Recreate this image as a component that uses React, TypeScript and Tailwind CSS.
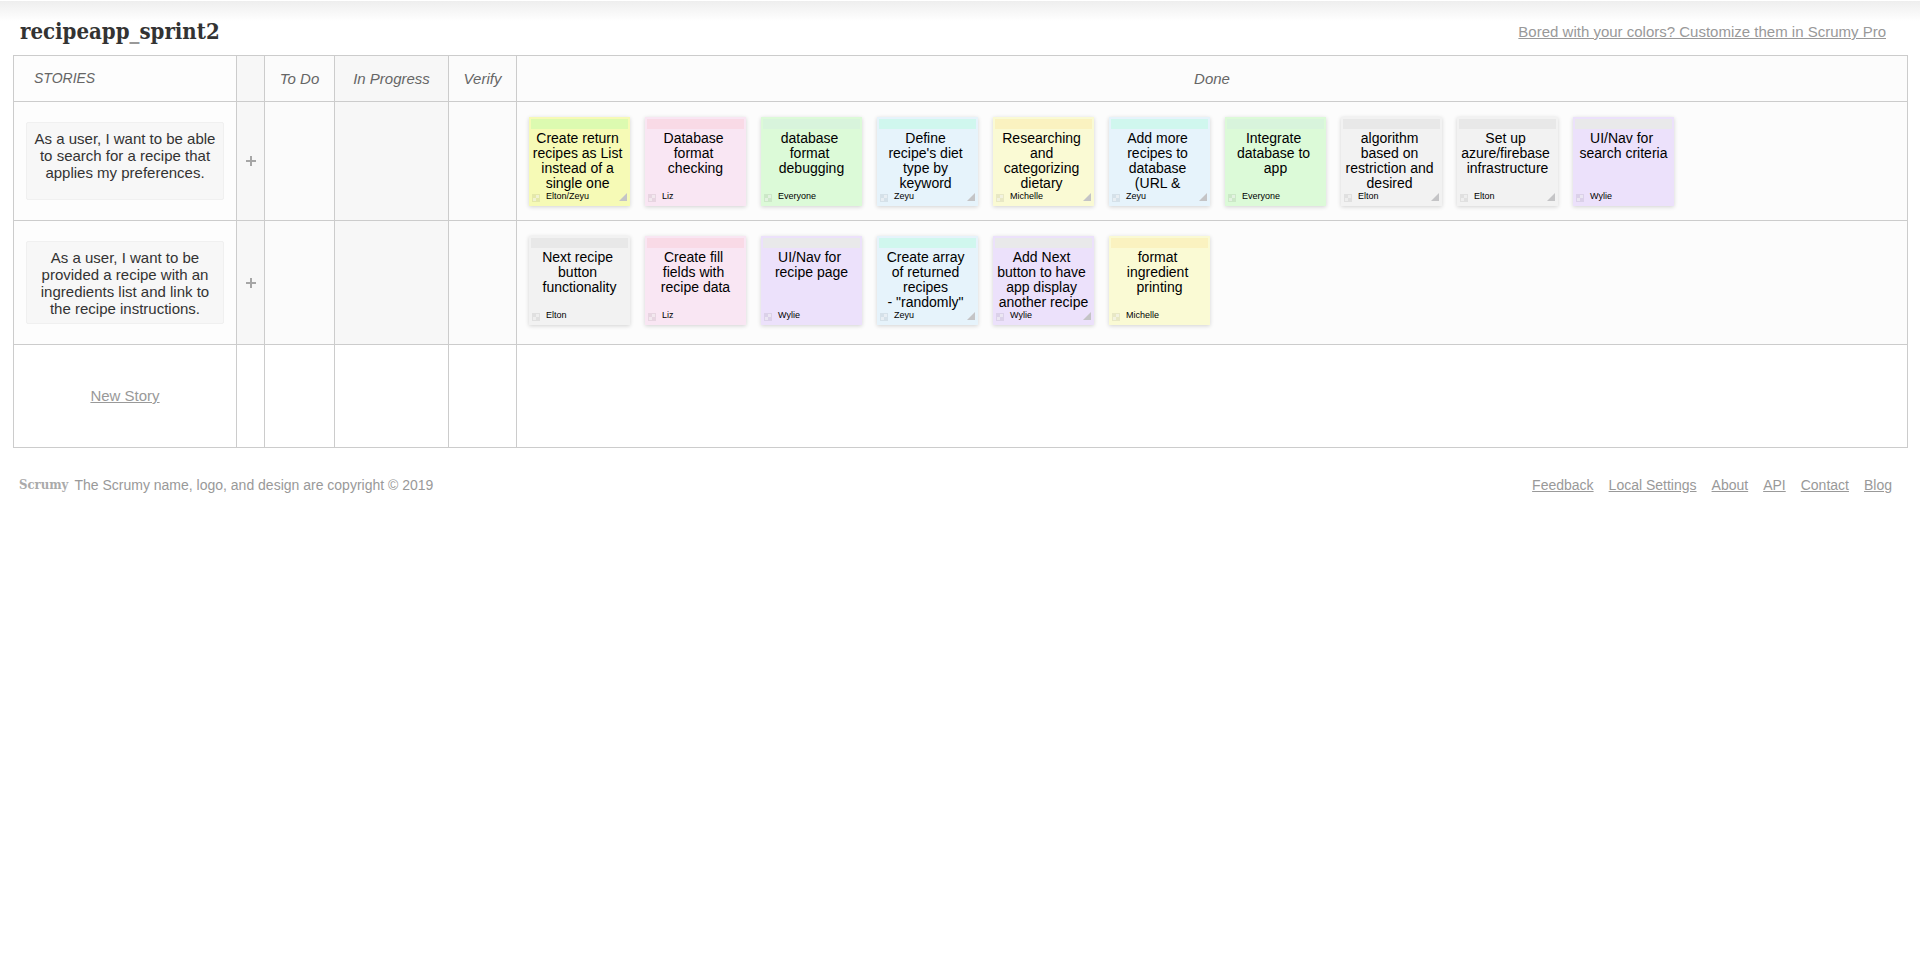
type Color = 'lime' | 'pink' | 'green' | 'blue' | 'yellow' | 'gray' | 'purple';

interface Task {
  color: Color;
  lines: string[];
  owner: string;
  /** The description runs on past the last visible line. */
  clipped?: boolean;
  grip?: boolean;
}

interface Story {
  title: string;
  done: Task[];
}

const noteColors: Record<Color, { body: string; bar: string }> = {
  lime: { body: 'bg-[#f6fab6]', bar: 'bg-[#dcfab0]' },
  pink: { body: 'bg-[#f9e6f3]', bar: 'bg-[#f9dae6]' },
  green: { body: 'bg-[#dcfad8]', bar: 'bg-[#d8f4dc]' },
  blue: { body: 'bg-[#e6f3fb]', bar: 'bg-[#d0f7ee]' },
  yellow: { body: 'bg-[#fafad4]', bar: 'bg-[#faf2c0]' },
  gray: { body: 'bg-[#f2f2f2]', bar: 'bg-[#e8e8e8]' },
  purple: { body: 'bg-[#ece1fb]', bar: 'bg-[#e9e9ea]' },
};

const stories: Story[] = [
  {
    title: 'As a user, I want to be able to search for a recipe that applies my preferences.',
    done: [
      { color: 'lime', lines: ['Create return', 'recipes as List', 'instead of a', 'single one'], owner: 'Elton/Zeyu', clipped: true, grip: true },
      { color: 'pink', lines: ['Database', 'format', 'checking'], owner: 'Liz' },
      { color: 'green', lines: ['database', 'format', 'debugging'], owner: 'Everyone' },
      { color: 'blue', lines: ['Define', "recipe's diet", 'type by', 'keyword'], owner: 'Zeyu', clipped: true, grip: true },
      { color: 'yellow', lines: ['Researching', 'and', 'categorizing', 'dietary'], owner: 'Michelle', clipped: true, grip: true },
      { color: 'blue', lines: ['Add more', 'recipes to', 'database', '(URL &'], owner: 'Zeyu', clipped: true, grip: true },
      { color: 'green', lines: ['Integrate', 'database to', 'app'], owner: 'Everyone' },
      { color: 'gray', lines: ['algorithm', 'based on', 'restriction and', 'desired'], owner: 'Elton', clipped: true, grip: true },
      { color: 'gray', lines: ['Set up', 'azure/firebase', 'infrastructure'], owner: 'Elton', grip: true },
      { color: 'purple', lines: ['UI/Nav for', 'search criteria'], owner: 'Wylie' },
    ],
  },
  {
    title: 'As a user, I want to be provided a recipe with an ingredients list and link to the recipe instructions.',
    done: [
      { color: 'gray', lines: ['Next recipe', 'button', 'functionality'], owner: 'Elton' },
      { color: 'pink', lines: ['Create fill', 'fields with', 'recipe data'], owner: 'Liz' },
      { color: 'purple', lines: ['UI/Nav for', 'recipe page'], owner: 'Wylie' },
      { color: 'blue', lines: ['Create array', 'of returned', 'recipes', '- "randomly"'], owner: 'Zeyu', clipped: true, grip: true },
      { color: 'purple', lines: ['Add Next', 'button to have', 'app display', 'another recipe'], owner: 'Wylie', grip: true },
      { color: 'yellow', lines: ['format', 'ingredient', 'printing'], owner: 'Michelle' },
    ],
  },
];

const footerLinks = ['Feedback', 'Local Settings', 'About', 'API', 'Contact', 'Blog'];

const cell = 'border border-[#cccccc] p-0';
const heading = 'border border-[#cccccc] p-0 text-[15px] leading-4 font-normal italic text-[#666666]';

function Note({ task }: { task: Task }) {
  const { body, bar } = noteColors[task.color];
  return (
    <li className={`flex h-[89px] w-[101px] flex-col p-[2px] shadow-[0_1px_4px_rgba(0,0,0,0.17)] ${body}`}>
      <div className={`h-[10px] shrink-0 ${bar}`} />
      <p className="mt-[2px] flex h-[60px] shrink-0 justify-center text-center text-[14px] leading-[15px] whitespace-pre text-black">
        {task.lines.join(' \n') + (task.clipped ? ' ' : '')}
      </p>
      <div className="flex h-[11px] items-center px-px">
        <svg className="mt-[2px] h-2 w-2" viewBox="0 0 8 8" aria-hidden="true">
          <rect width="8" height="8" fill="#000" opacity="0.07" />
          <path d="M4 1h3v3H4zM1 4h3v3H1z" fill="#fff" opacity="0.45" />
        </svg>
        <span className="ml-[6px] text-[9px] leading-[11px] text-black">{task.owner}</span>
        {task.grip && (
          <svg className="mt-px ml-auto h-2 w-2" viewBox="0 0 8 8" aria-hidden="true">
            <path d="M8 0v8H0z" fill="#c4c4c6" />
          </svg>
        )}
      </div>
    </li>
  );
}

function StoryRow({ story }: { story: Story }) {
  return (
    <tr>
      <td className={`${cell} bg-[#fdfdfd]`}>
        <div className="mx-3 my-5 min-h-[78px] rounded-xs border border-[#f0f0f0] bg-[#f7f7f7] px-1 pt-[7px] pb-[6px] text-center text-[15px] leading-[17px] text-[#333333]">
          {story.title}
        </div>
      </td>
      <td className={`${cell} bg-[#f7f7f7]`}>
        <button type="button" aria-label="Add task" className="mx-auto flex h-6 w-6 items-center justify-center">
          <svg className="h-[10px] w-[10px]" viewBox="0 0 10 10" aria-hidden="true">
            <path d="M4 0h2v4h4v2H6v4H4V6H0V4h4z" fill="#a6a6a6" />
          </svg>
        </button>
      </td>
      <td className={`${cell} bg-[#fbfbfb]`} />
      <td className={`${cell} bg-[#f7f7f7]`} />
      <td className={`${cell} bg-[#fbfbfb]`} />
      <td className={`${cell} bg-[#fcfcfc] align-top`}>
        <ul className="flex flex-wrap gap-[15px] px-3 pt-[15px] pb-[14px]">
          {story.done.map((task) => (
            <Note key={task.lines.join(' ')} task={task} />
          ))}
        </ul>
      </td>
    </tr>
  );
}

export default function App() {
  return (
    <div className="min-h-screen bg-white font-['Liberation_Sans',Arial,sans-serif] text-[#999999]">
      <header className="flex h-[55px] items-start justify-between border-t border-white bg-[linear-gradient(to_bottom,#eeeeee,#ffffff_20px)] pr-[34px] pl-5">
        <h1 className="mt-4 font-['DejaVu_Serif_Condensed','DejaVu_Serif',serif] text-[22px] leading-7 font-bold text-[#333333]">
          recipeapp<span className="text-[#999999]">_</span>sprint2
        </h1>
        <a href="#pro" className="mt-[22px] text-[15px] leading-[18px] underline">
          Bored with your colors? Customize them in Scrumy Pro
        </a>
      </header>

      <main className="pr-3 pl-[13px]">
        <table className="w-full table-fixed border-collapse">
          <colgroup>
            <col className="w-[223px]" />
            <col className="w-[28px]" />
            <col className="w-[70px]" />
            <col className="w-[114px]" />
            <col className="w-[68px]" />
            <col />
          </colgroup>
          <thead>
            <tr className="h-[46px]">
              <th className={`${heading} bg-[#fdfdfd] text-left`}>
                <div className="pb-px pl-5 text-[14px]">STORIES</div>
              </th>
              <th className={`${heading} bg-[#f7f7f7]`} />
              <th className={`${heading} bg-[#fbfbfb]`}>To Do</th>
              <th className={`${heading} bg-[#f7f7f7]`}>In Progress</th>
              <th className={`${heading} bg-[#fbfbfb]`}>Verify</th>
              <th className={`${heading} bg-[#fcfcfc]`}>Done</th>
            </tr>
          </thead>
          <tbody>
            {stories.map((story) => (
              <StoryRow key={story.title} story={story} />
            ))}
            <tr className="h-[103px]">
              <td className={`${cell} text-center text-[15px] leading-[18px]`}>
                <a href="#new-story" className="underline">
                  New Story
                </a>
              </td>
              <td className={cell} />
              <td className={cell} />
              <td className={cell} />
              <td className={cell} />
              <td className={cell} />
            </tr>
          </tbody>
        </table>
      </main>

      <footer className="mt-[28px] flex items-center justify-between pr-7 pl-[19px] text-[14px] leading-[18px]">
        <p className="flex items-center gap-[6px]">
          <span className="font-['DejaVu_Serif_Condensed','DejaVu_Serif',serif] text-[13px] font-bold text-[#aaaaaa]">Scrumy</span>
          <span>The Scrumy name, logo, and design are copyright © 2019</span>
        </p>
        <nav className="flex gap-[15px]">
          {footerLinks.map((label) => (
            <a key={label} href="#footer" className="underline">
              {label}
            </a>
          ))}
        </nav>
      </footer>
    </div>
  );
}
